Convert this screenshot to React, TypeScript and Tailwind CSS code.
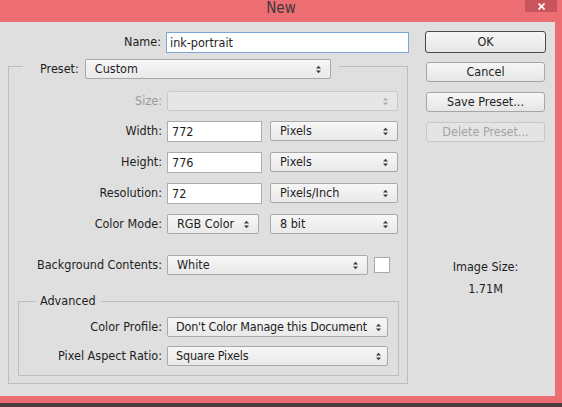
import React from "react";

const font = "font-['DejaVu_Sans_Condensed','DejaVu_Sans',sans-serif]";

function Arrows({ faded }: { faded?: boolean }) {
  return (
    <svg width="7" height="9" viewBox="0 0 7 9" className="shrink-0">
      <polygon points="1,3.5 3.5,0.8 6,3.5" fill={faded ? "#a8a8a8" : "#3a3a3a"} />
      <polygon points="1,5.5 3.5,8.2 6,5.5" fill={faded ? "#a8a8a8" : "#3a3a3a"} />
    </svg>
  );
}

function Select({ w, text, disabled, tight }: { w: string; text?: string; disabled?: boolean; tight?: boolean }) {
  return (
    <div
      className={`${w} h-[20px] flex items-center justify-between rounded-[2px] border ${
        tight ? "pl-[8px] pr-[5px]" : "pl-[9px] pr-[8px]"
      } ${
        disabled
          ? "border-[#c9c9c9] bg-[#e6e6e6]"
          : "border-[#a9a9a9] bg-linear-to-b from-[#f7f7f7] to-[#e9e9e9]"
      }`}
    >
      <span className={`whitespace-nowrap leading-[18px] ${tight ? "tracking-[-0.2px]" : ""}`}>{text}</span>
      <Arrows faded={disabled} />
    </div>
  );
}

function Input({ w, value }: { w: string; value: string }) {
  return (
    <div className={`${w} h-[21px] bg-white border border-[#abadb3] pl-[4px] leading-[19px]`}>{value}</div>
  );
}

function Btn({ label, disabled }: { label: string; disabled?: boolean }) {
  return (
    <div
      className={`ml-[1px] w-[119px] h-[20px] rounded-[3px] border text-center leading-[18px] ${
        disabled
          ? "border-[#c8c8c8] bg-[#e4e4e4] text-[#a3a3a3]"
          : "border-[#a6a6a6] bg-linear-to-b from-[#f6f6f6] to-[#e6e6e6]"
      }`}
    >
      {label}
    </div>
  );
}

function Row({ label, lw, children, gray }: { label: string; lw: string; children: React.ReactNode; gray?: boolean }) {
  return (
    <div className="flex items-center h-[20px]">
      <div className={`${lw} text-right whitespace-nowrap ${gray ? "text-[#9a9a9a]" : ""}`}>{label}</div>
      <div className="ml-[5px] flex items-center">{children}</div>
    </div>
  );
}

export default function App() {
  return (
    <div className={`w-[562px] h-[407px] bg-[#ed6e72] flex flex-col text-[12.5px] text-[#1e1e1e] ${font}`}>
      {/* title bar */}
      <div className="relative h-[22px] flex justify-center">
        <span className="text-[15px] leading-[17px] text-[#3a3a3a]">New</span>
        <div className="absolute right-[5px] top-0 w-[32px] h-[12px] bg-[#c9545b] flex items-center justify-center">
          <svg width="7" height="7" viewBox="0 0 7 7">
            <path d="M0.5 0.5 L6.5 6.5 M6.5 0.5 L0.5 6.5" stroke="#fff" strokeWidth="1.6" />
          </svg>
        </div>
      </div>

      <div className="flex h-[374px]">
        <div className="w-[555px] bg-[#dfdfdf] flex pt-[10px]">
          {/* left column */}
          <div className="w-[410px] flex flex-col">
            <div className="flex items-center h-[21px]">
              <div className="w-[161px] text-right">Name:</div>
              <div className="ml-[5px] w-[243px] h-[21px] bg-white border border-[#7aa7d6] pl-[3px] leading-[19px]">
                ink-portrait
              </div>
            </div>

            {/* preset group */}
            <div className="mt-[6px] ml-[8px] w-[400px] flex flex-col">
              <div className="flex h-[20px] -mb-[13px]">
                <div className="w-[15px] h-px mt-[7px] bg-[#bdbdbd]" />
                <div className="ml-[17px] leading-[20px]">Preset:</div>
                <div className="ml-[6px]">
                  <Select w="w-[246px]" text="Custom" />
                </div>
                <div className="ml-[8px] flex-1 h-px mt-[7px] bg-[#bdbdbd]" />
              </div>
              <div className="h-[318px] border-l border-r border-b border-[#bdbdbd] flex flex-col">
                <div className="mt-[25px]">
                  <Row label="Size:" lw="w-[153px]" gray>
                    <Select w="w-[231px]" disabled />
                  </Row>
                </div>
                <div className="mt-[10px]">
                  <Row label="Width:" lw="w-[153px]">
                    <Input w="w-[95px]" value="772" />
                    <div className="ml-[8px]"><Select w="w-[128px]" text="Pixels" /></div>
                  </Row>
                </div>
                <div className="mt-[11px]">
                  <Row label="Height:" lw="w-[153px]">
                    <Input w="w-[95px]" value="776" />
                    <div className="ml-[8px]"><Select w="w-[128px]" text="Pixels" /></div>
                  </Row>
                </div>
                <div className="mt-[11px]">
                  <Row label="Resolution:" lw="w-[153px]">
                    <Input w="w-[95px]" value="72" />
                    <div className="ml-[8px]"><Select w="w-[128px]" text="Pixels/Inch" /></div>
                  </Row>
                </div>
                <div className="mt-[11px]">
                  <Row label="Color Mode:" lw="w-[153px]">
                    <Select w="w-[92px]" text="RGB Color" />
                    <div className="ml-[11px]"><Select w="w-[128px]" text="8 bit" /></div>
                  </Row>
                </div>
                <div className="mt-[21px]">
                  <Row label="Background Contents:" lw="w-[153px]">
                    <Select w="w-[201px]" text="White" />
                    <div className="ml-[6px] w-[16px] h-[16px] bg-white border border-[#a9a9a9]" />
                  </Row>
                </div>

                {/* advanced group */}
                <div className="mt-[19px] ml-[9px] w-[381px] flex flex-col">
                  <div className="flex h-[14px] -mb-[7px]">
                    <div className="w-[18px] h-px mt-[7px] bg-[#bdbdbd]" />
                    <div className="ml-[4px] leading-[14px]">Advanced</div>
                    <div className="ml-[5px] flex-1 h-px mt-[7px] bg-[#bdbdbd]" />
                  </div>
                  <div className="h-[75px] border-l border-r border-b border-[#bdbdbd] flex flex-col">
                    <div className="mt-[16px]">
                      <Row label="Color Profile:" lw="w-[143px]">
                        <Select w="w-[221px]" text="Don't Color Manage this Document" tight />
                      </Row>
                    </div>
                    <div className="mt-[9px]">
                      <Row label="Pixel Aspect Ratio:" lw="w-[143px]">
                        <Select w="w-[221px]" text="Square Pixels" tight />
                      </Row>
                    </div>
                  </div>
                </div>
              </div>
            </div>
          </div>

          {/* right column */}
          <div className="ml-[15px] w-[121px] flex flex-col">
            <div className="-mt-[1px] w-[121px] h-[22px] rounded-[3px] border border-[#4a4a4a] bg-linear-to-b from-[#f6f6f6] to-[#e6e6e6] text-center leading-[20px]">
              OK
            </div>
            <div className="mt-[9px]"><Btn label="Cancel" /></div>
            <div className="mt-[10px]"><Btn label="Save Preset..." /></div>
            <div className="mt-[10px]"><Btn label="Delete Preset..." disabled /></div>
            <div className="mt-[118px] text-center leading-[14px]">Image Size:</div>
            <div className="mt-[8px] text-center leading-[14px]">1.71M</div>
          </div>
        </div>
      </div>

      <div className="h-[7px]" />
      <div className="h-[4px] bg-[#4a3c3c]" />
    </div>
  );
}
